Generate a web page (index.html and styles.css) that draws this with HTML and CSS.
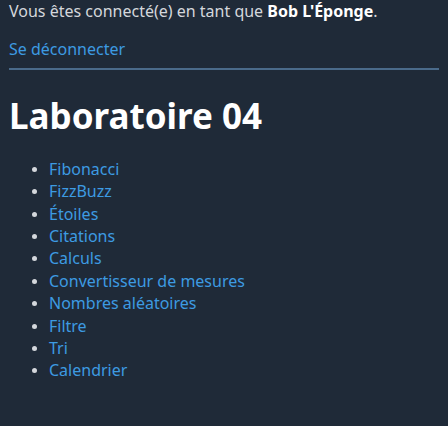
FILE: index.html
```html
<!DOCTYPE html>
<html lang="fr">
<head>
<meta charset="utf-8">
<title>Laboratoire 04</title>
<link rel="stylesheet" href="styles.css">
</head>
<body>
<header class="top">
  <p class="status">Vous êtes connecté(e) en tant que <strong>Bob L'Éponge</strong>.</p>
  <p class="logout"><a href="#">Se déconnecter</a></p>
  <hr class="sep">
</header>
<main>
  <h1 class="title">Laboratoire 04</h1>
  <ul class="labs">
    <li><a href="#">Fibonacci</a></li>
    <li><a href="#">FizzBuzz</a></li>
    <li><a href="#">Étoiles</a></li>
    <li><a href="#">Citations</a></li>
    <li><a href="#">Calculs</a></li>
    <li><a href="#">Convertisseur de mesures</a></li>
    <li><a href="#">Nombres aléatoires</a></li>
    <li><a href="#">Filtre</a></li>
    <li><a href="#">Tri</a></li>
    <li><a href="#">Calendrier</a></li>
  </ul>
</main>
</body>
</html>
```
FILE: styles.css
```css
html { background: #1f2a38; }
body {
  margin: 0;
  padding: 0 9px;
  background: #1f2a38;
  color: #d4d7dc;
  font-family: "Noto Sans", "DejaVu Sans", sans-serif;
  font-size: 16px;
  line-height: 1.4;
}
a { color: #3d9be2; text-decoration: none; }
.status { margin: 0; }
.status strong { color: #ffffff; font-weight: 700; }
.logout { margin: 16px 0 0; }
.sep {
  margin: 7px 0 0;
  border: 0;
  border-top: 2px solid #4a6a8a;
}
.title {
  margin: 25px 0 0;
  font-size: 35px;
  line-height: 1.2;
  color: #ffffff;
  font-weight: 700;
}
.labs {
  margin: 21px 0 0;
  padding-left: 40px;
}
.labs li::marker { color: #d4d7dc; font-size: 14px; }
```
